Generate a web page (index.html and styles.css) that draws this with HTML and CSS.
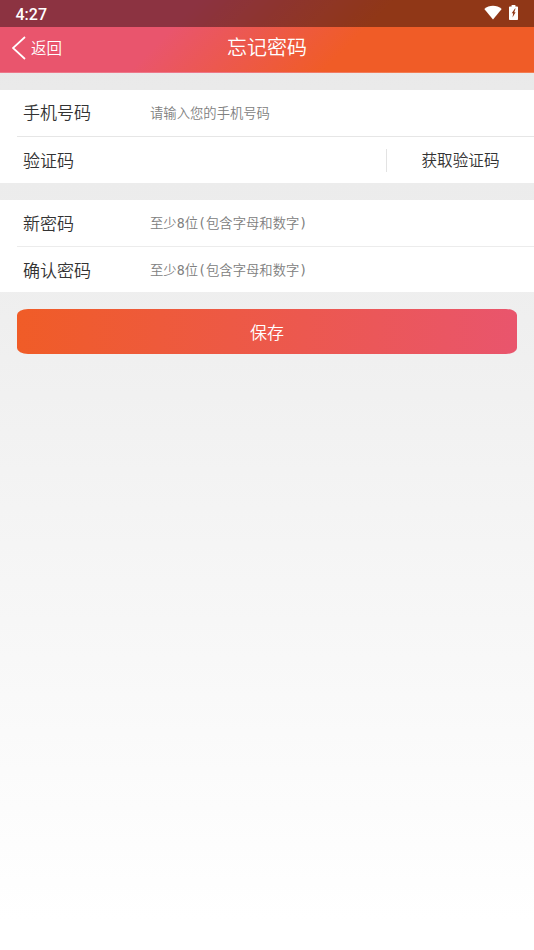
FILE: index.html
```html
<!DOCTYPE html>
<html lang="zh-CN">
<head>
<meta charset="utf-8">
<title>忘记密码</title>
<link rel="stylesheet" href="styles.css">
</head>
<body>
<header class="top">
  <div class="status">
    <span class="time">4:27</span>
    <svg class="wifi" viewBox="0 0 18 15" width="18" height="15"><path d="M.3 4C2.8 1.900 5.700.8 9 .8s6.200 1.100 8.700 3.200L9 14.500z" fill="#fff"/></svg>
    <svg class="battery" viewBox="0 0 9 15" width="9" height="15"><path fill="#fff" fill-rule="evenodd" d="M2.600 0h3.800v1.500H8.200q.8 0 .8.800v12q0 .7-.8.700H.8Q0 15 0 14.300v-12q0-.8.800-.8h1.800zM6 3.500 2.700 8.300h1.500L3.500 12.500 6.600 7.300H5.200L6.600 3.500z"/></svg>
  </div>
  <nav class="nav">
    <a class="back"><svg viewBox="0 0 14 24" width="14" height="24"><path d="M13 1 1 12l12 11" fill="none" stroke="#fff" stroke-width="1.700"/></svg><span>返回</span></a>
    <h1>忘记密码</h1>
  </nav>
</header>
<main>
  <section class="group">
    <label class="row"><span class="label">手机号码</span><input placeholder="请输入您的手机号码"></label>
    <div class="row"><span class="label">验证码</span><input class="code" aria-label="验证码"><button class="get">获取验证码</button></div>
  </section>
  <section class="group second">
    <label class="row"><span class="label">新密码</span><input placeholder="至少8位(包含字母和数字)"></label>
    <label class="row"><span class="label">确认密码</span><input placeholder="至少8位(包含字母和数字)"></label>
  </section>
  <button class="save">保存</button>
</main>
</body>
</html>
```
FILE: styles.css
```css
* { box-sizing: border-box; }
body {
  margin: 0;
  height: 950px;
  overflow: hidden;
  font-family: "Noto Sans CJK SC", sans-serif;
  font-weight: 350;
  color: #333;
  background: linear-gradient(#e8e8e8 0, #eaeaea 90px, #efefef 320px, #fff 920px);
}
button, input { font: inherit; color: inherit; border: 0; padding: 0; background: none; }
.top {
  height: 73px;
  background: linear-gradient(135deg, #e9556d 33%, #f05c27 65%);
  border-bottom: 1px solid rgba(255, 255, 255, .2);
  color: #fff;
}
.status {
  height: 27px;
  display: flex;
  align-items: flex-start;
  padding: 0 16px 0 15.500px;
  background: rgba(0, 0, 0, .4);
}
.time { flex: 1; font: 500 16px/29px Roboto, sans-serif; }
.wifi { margin: 5px 7px 0 0; }
.battery { margin-top: 5px; }
.nav {
  height: 45px;
  display: grid;
  grid-template-columns: 1fr auto 1fr;
  align-items: center;
  padding: 0 12px;
}
.back { display: flex; align-items: center; gap: 5px; font-size: 15.500px; line-height: 24px; padding-top: 1px; }
.back svg { margin-top: -4px; }
.back span { margin-top: -6px; }
h1 { margin: -6px 0 0; font-size: 20px; line-height: 28px; font-weight: 350; }
main { padding-top: 17px; }
.group { background: #fff; height: 92.500px; margin-bottom: 17px; }
.row {
  height: 46px;
  margin-left: 17px;
  padding-left: 6px;
  display: flex;
  align-items: center;
}
.row + .row { height: 46.500px; border-top: 1px solid #e6e6e6; }
.second .row { padding-top: 1.500px; }
.second .row + .row { border-color: #ececec; }
.label { width: 127px; flex: none; margin-top: -2px; font-size: 17px; line-height: 26px; }
.row + .row .label { margin-top: 0; }
.second .label, .second .row + .row .label { margin-top: -1px; }
.row input {
  flex: 1;
  min-width: 0;
  height: 26px;
  font-family: "DejaVu Sans Mono", "Noto Sans CJK SC", monospace;
  font-size: 13.330px;
}
.row input::placeholder { color: #808080; opacity: 1; }
.get { width: 148px; height: 23px; margin-top: 1px; border-left: 1px solid #e3e3e3; padding-bottom: 2px; font-size: 15.600px; line-height: 21px; }
.save {
  display: block;
  width: 500px;
  height: 45px;
  margin: 0 17px;
  padding-bottom: 1px;
  border-radius: 11px / 6px;
  background: linear-gradient(93deg, #f05c27, #e9556d);
  color: #fff;
  font-size: 17px;
}
```
